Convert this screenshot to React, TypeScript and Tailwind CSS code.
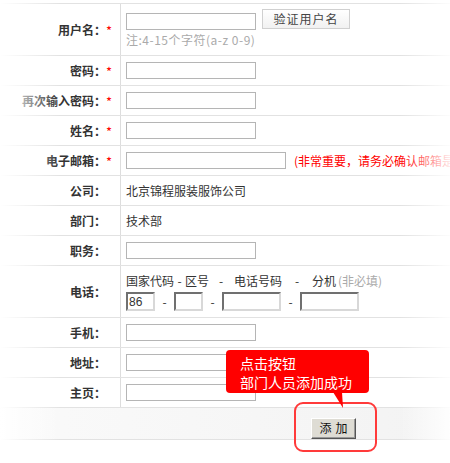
import React from "react";

const FONT = { fontFamily: '"Noto Sans CJK SC", "Liberation Sans", sans-serif' };

function Label({ text, star }: { text: string; star?: boolean }) {
  return (
    <div className="w-[121px] shrink-0 h-full flex items-center justify-end pr-[5px] border-r border-[#dddddd]">
      <span className="text-[12px] font-bold text-[#333333] leading-none">{text}</span>
      <span className="w-[9px] text-[13px] text-[#ff0000] leading-none pt-[2px]">{star ? "*" : ""}</span>
    </div>
  );
}

function TextInput({ w = "w-[130px]", value = "" }: { w?: string; value?: string }) {
  return (
    <input
      readOnly
      value={value}
      className={`block shrink-0 ${w} h-[17px] border border-[#b5b5b5] bg-white text-[12px] px-[2px] outline-none`}
    />
  );
}

function InsetInput({ w, value = "" }: { w: string; value?: string }) {
  return (
    <input
      readOnly
      value={value}
      className={`block shrink-0 ${w} h-[19px] border-2 border-t-[#707070] border-l-[#707070] border-r-[#d8d8d8] border-b-[#d8d8d8] bg-white text-[12px] leading-none px-[1px] outline-none`}
      style={{ fontFamily: '"Liberation Sans", sans-serif' }}
    />
  );
}

function Row({ label, star, h = "h-[30px]", children }: { label: string; star?: boolean; h?: string; children: React.ReactNode }) {
  return (
    <div className={`flex ${h} border-b border-[#e2e2e2]`}>
      <Label text={label} star={star} />
      <div className="flex-1 min-w-0 h-full pl-[5px] flex items-center">{children}</div>
    </div>
  );
}

export default function App() {
  return (
    <div className="relative w-[450px] h-[463px] bg-white overflow-hidden" style={FONT}>
      <div className="mt-[3px] border-t border-[#e2e2e2]">
        {/* 用户名 */}
        <div className="flex h-[52px] border-b border-[#e2e2e2]">
          <Label text="用户名：" star />
          <div className="flex-1 min-w-0 pl-[5px] pt-[5px]">
            <div className="flex items-start gap-[6px]">
              <div className="pt-[4px]">
                <TextInput />
              </div>
              <button className="w-[88px] h-[20px] border border-[#d0d0d0] bg-gradient-to-b from-white to-[#f1f1f1] text-[12px] text-[#444444] leading-none tracking-[1px]">
                验证用户名
              </button>
            </div>
            <div className="mt-[4px] text-[12px] leading-none text-[#aaaaaa] tracking-[0.5px] whitespace-nowrap">注:4-15个字符(a-z 0-9)</div>
          </div>
        </div>

        <Row label="密码：" star>
          <TextInput />
        </Row>
        <Row label="再次输入密码：" star>
          <TextInput />
        </Row>
        <Row label="姓名：" star>
          <TextInput />
        </Row>
        <Row label="电子邮箱：" star>
          <TextInput w="w-[160px]" />
          <span className="ml-[8px] text-[12px] text-[#ff0000] whitespace-nowrap">(非常重要，请务必确认邮箱是</span>
        </Row>
        <Row label="公司：">
          <span className="text-[12px] text-[#333333]">北京锦程服装服饰公司</span>
        </Row>
        <Row label="部门：">
          <span className="text-[12px] text-[#333333]">技术部</span>
        </Row>
        <Row label="职务：">
          <TextInput />
        </Row>

        {/* 电话 */}
        <div className="flex h-[52px] border-b border-[#e2e2e2]">
          <Label text="电话：" />
          <div className="flex-1 min-w-0 pl-[5px] pt-[7px]">
            <div className="flex items-center h-[16px] text-[12px] text-[#333333] whitespace-nowrap">
              <span className="w-[48px]">国家代码</span>
              <span className="w-[11px] text-center">-</span>
              <span className="w-[24px]">区号</span>
              <span className="w-[24px] text-center">-</span>
              <span className="ml-[1px] w-[48px]">电话号码</span>
              <span className="w-[30px] text-center">-</span>
              <span className="w-[26px]">分机</span>
              <span className="text-[#aaaaaa]">(非必填)</span>
            </div>
            <div className="mt-[3px] flex items-center text-[12px] text-[#333333]">
              <InsetInput w="w-[29px]" value="86" />
              <span className="w-[19px] text-center">-</span>
              <InsetInput w="w-[29px]" />
              <span className="w-[19px] text-center">-</span>
              <InsetInput w="w-[59px]" />
              <span className="w-[19px] text-center">-</span>
              <InsetInput w="w-[59px]" />
            </div>
          </div>
        </div>

        <Row label="手机：">
          <TextInput />
        </Row>
        <Row label="地址：">
          <TextInput />
        </Row>
        <Row label="主页：">
          <TextInput />
        </Row>

        {/* 按钮 */}
        <div className="h-[32px] border-b border-[#e2e2e2] bg-gradient-to-r from-[#fafafa] to-[#f3f3f3] pl-[311px] pt-[6px]">
          <button className="w-[45px] h-[21px] bg-[#dedcd4] border border-t-white border-l-white border-r-[#555555] border-b-[#555555] shadow-[inset_-1px_-1px_0_#999999] text-[12px] text-[#111111] leading-none tracking-[4px] pl-[4px]">
            添加
          </button>
        </div>
      </div>

      {/* edge fades */}
      <div className="absolute left-0 top-0 h-full w-[60px] bg-gradient-to-r from-white to-transparent pointer-events-none" />
      <div className="absolute right-0 top-0 h-full w-[50px] bg-gradient-to-r from-transparent to-white/90 pointer-events-none" />

      {/* callout */}
      <div className="absolute left-[294px] top-[402px] w-[83px] h-[50px] rounded-[9px] border-2 border-[#ff3a3a] pointer-events-none" />
      <div className="absolute left-[226px] top-[350px] w-[143px] h-[43px] rounded-[4px] bg-[#ff0000] pl-[14px] pt-[4px] text-[14px] leading-[19px] text-white">
        <div>点击按钮</div>
        <div>部门人员添加成功</div>
      </div>
      <svg className="absolute left-[330px] top-[392px]" width="16" height="18" viewBox="0 0 16 18">
        <polygon points="3,0 12,0 13,16" fill="#ff0000" />
      </svg>
    </div>
  );
}
